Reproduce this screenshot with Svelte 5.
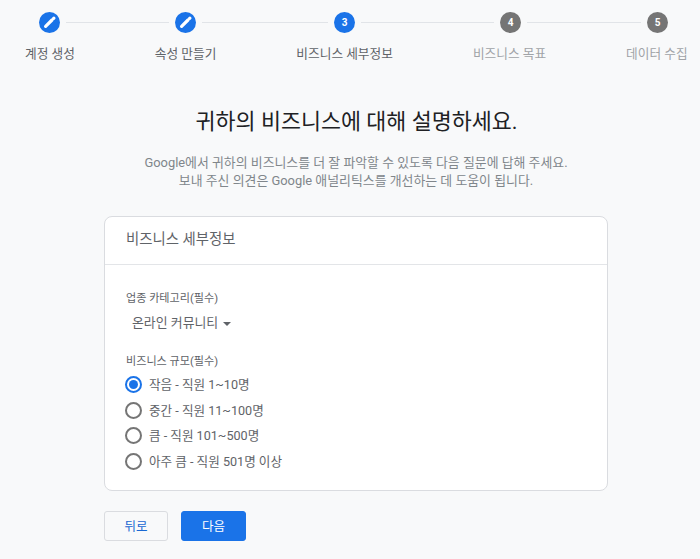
<script>
  const labels = [
    { text: '계정 생성', state: 'done' },
    { text: '속성 만들기', state: 'done' },
    { text: '비즈니스 세부정보', state: 'active' },
    { text: '비즈니스 목표', state: 'todo' },
    { text: '데이터 수집', state: 'todo' }
  ];
  const sizes = ['작음 - 직원 1~10명', '중간 - 직원 11~100명', '큼 - 직원 101~500명', '아주 큼 - 직원 501명 이상'];
</script>

<div class="page">
  <div class="circles">
    {#each labels as step, i}
      <span class="circle {step.state}">
        {#if step.state === 'done'}
          <svg viewBox="0 0 21 21" width="21" height="21"><path fill="none" stroke="#fff" stroke-width="3.2" stroke-linecap="round" d="M6.6 14.4 13 8"/><path fill="none" stroke="#fff" stroke-width="3.2" stroke-linecap="round" d="M14.6 6.4 14.9 6.1"/></svg>
        {:else}
          {i + 1}
        {/if}
      </span>
      {#if i < 4}<span class="line l{i}"></span>{/if}
    {/each}
  </div>
  <div class="labels">
    {#each labels as step}
      <span class="label {step.state}">{step.text}</span>
    {/each}
  </div>

  <h1>귀하의 비즈니스에 대해 설명하세요.</h1>
  <p class="intro">Google에서 귀하의 비즈니스를 더 잘 파악할 수 있도록 다음 질문에 답해 주세요.<br />보내 주신 의견은 Google 애널리틱스를 개선하는 데 도움이 됩니다.</p>

  <section class="card">
    <div class="head">비즈니스 세부정보</div>
    <div class="body">
      <div class="field-label">업종 카테고리(필수)</div>
      <div class="select"><span>온라인 커뮤니티</span><i class="caret"></i></div>
      <div class="field-label size">비즈니스 규모(필수)</div>
      <div class="radios">
        {#each sizes as s, i}
          <div class="radio-row">
            <span class="radio" class:on={i === 0}></span>
            <span class="radio-text">{s}</span>
          </div>
        {/each}
      </div>
    </div>
  </section>

  <div class="actions">
    <button class="back">뒤로</button>
    <button class="next">다음</button>
  </div>
</div>

<style>
  :global(body) { margin: 0; background: #f8f9fa; overflow: hidden; }
  .page {
    height: 559px; background: #f8f9fa; overflow: hidden; box-sizing: border-box;
    font-family: Roboto, "Noto Sans CJK KR", sans-serif; color: #3c4043; padding-top: 12px;
  }
  .circles { display: flex; align-items: center; padding-left: 39px; height: 21px; }
  .circle {
    width: 21px; height: 21px; border-radius: 50%; flex: none; display: flex;
    align-items: center; justify-content: center; color: #fff; font-size: 10px; font-weight: 700;
    background: #1a73e8;
  }
  .circle.todo { background: #757575; }
  .line { height: 1px; background: #e1e4e8; margin: 0 6px; flex: none; }
  .l0 { width: 103px; }
  .l1 { width: 126px; }
  .l2 { width: 133px; }
  .l3 { width: 114px; }
  .labels { display: flex; gap: 80px; padding-left: 25px; margin-top: 12px; white-space: nowrap; font-size: 12.7px; line-height: 18px; }
  .label.done, .label.active { color: #5f6368; }
  .label.todo { color: #a0a3a7; }
  h1 { margin: 43px 0 0 13px; text-align: center; font-size: 21.75px; font-weight: 400; line-height: 32px; color: #202124; }
  .intro { margin: 16px 0 0 12px; text-align: center; font-size: 12.9px; line-height: 18px; color: #80868b; }
  .card { margin: 26px 92px 0 104px; box-sizing: border-box; height: 275px; background: #fff; border: 1px solid #dadce0; border-radius: 8px; }
  .head { height: 48px; line-height: 46px; box-sizing: border-box; padding-left: 21px; border-bottom: 1px solid #e3e5e8; font-size: 14.4px; color: #5f6368; }
  .body { padding: 26px 0 0 21px; }
  .field-label { font-size: 11.1px; line-height: 16px; color: #5f6368; }
  .select { display: flex; align-items: center; gap: 5px; margin: 6px 0 0 6px; font-size: 12.9px; line-height: 20px; color: #5f6368; }
  .caret { width: 0; height: 0; border: 4px solid transparent; border-top: 4px solid #5f6368; border-bottom: 0; margin-top: 2px; }
  .field-label.size { margin-top: 21px; }
  .radios { margin: 2px 0 0 -1px; }
  .radio-row { display: flex; align-items: center; gap: 7px; height: 25.5px; font-size: 12.6px; color: #5f6368; }
  .radio-text { padding-bottom: 2px; }
  .radio { width: 17px; height: 17px; box-sizing: border-box; border: 2px solid #757575; border-radius: 50%; flex: none; display: flex; align-items: center; justify-content: center; }
  .radio.on { border-color: #1a73e8; }
  .radio.on::after { content: ""; width: 9px; height: 9px; border-radius: 50%; background: #1a73e8; }
  .actions { display: flex; gap: 13px; margin: 20px 0 0 104px; }
  button { height: 30px; border-radius: 3px; font: inherit; font-size: 12.5px; padding: 0 0 2px; }
  .back { width: 64px; background: #f8f9fa; border: 1px solid #dadce0; color: #1967d2; }
  .next { width: 65px; background: #1a73e8; border: 1px solid #1a73e8; color: #fff; }
</style>
